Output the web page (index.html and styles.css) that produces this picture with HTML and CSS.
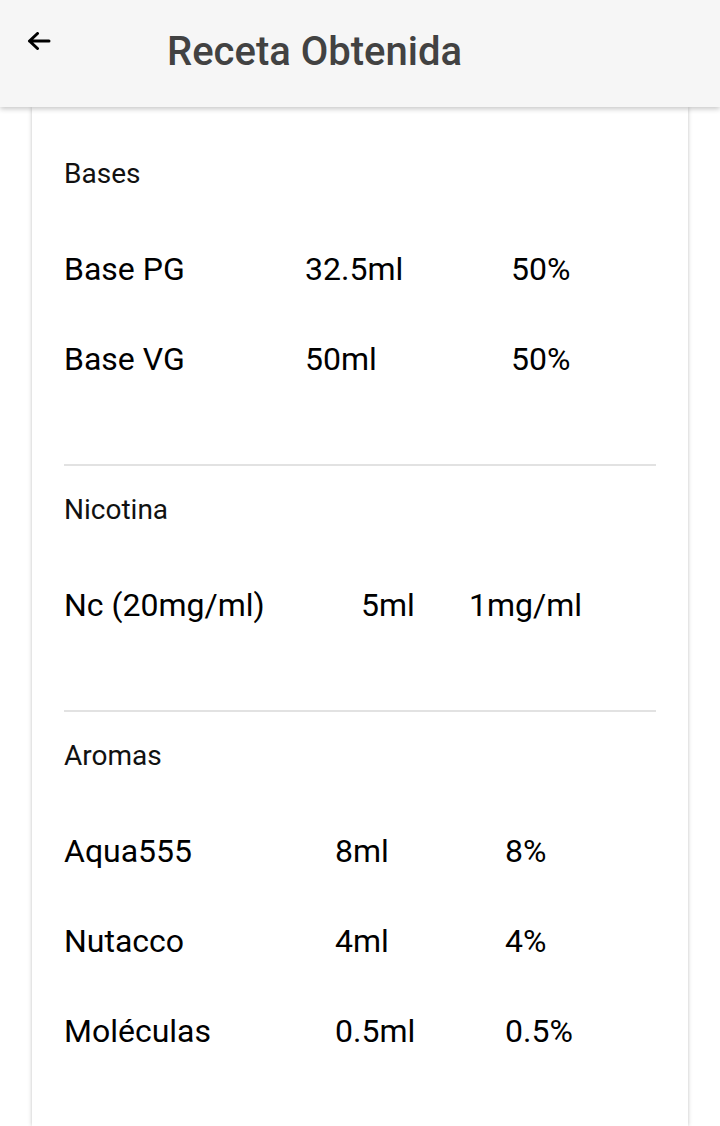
FILE: index.html
```html
<!DOCTYPE html>
<html lang="es">
<head>
<meta charset="utf-8">
<title>Receta Obtenida</title>
<link rel="stylesheet" href="styles.css">
</head>
<body>
<header class="appbar">
  <button class="back" aria-label="Atrás">
    <svg width="24" height="18" viewBox="0 0 24 18" aria-hidden="true">
      <path d="M10.5 1.5 L2.5 9 L10.5 16.5 M2.5 9 H22" fill="none" stroke="#000" stroke-width="3" stroke-linecap="round" stroke-linejoin="round"/>
    </svg>
  </button>
  <h1 class="title">Receta Obtenida</h1>
</header>
<main class="card">
  <section class="section bases">
    <h2 class="section-title">Bases</h2>
    <div class="rows">
      <div class="row"><span>Base PG</span><span>32.5ml</span><span>50%</span></div>
      <div class="row"><span>Base VG</span><span>50ml</span><span>50%</span></div>
    </div>
  </section>
  <section class="section nicotina">
    <h2 class="section-title">Nicotina</h2>
    <div class="rows">
      <div class="row"><span>Nc (20mg/ml)</span><span>5ml</span><span>1mg/ml</span></div>
    </div>
  </section>
  <section class="section aromas">
    <h2 class="section-title">Aromas</h2>
    <div class="rows">
      <div class="row"><span>Aqua555</span><span>8ml</span><span>8%</span></div>
      <div class="row"><span>Nutacco</span><span>4ml</span><span>4%</span></div>
      <div class="row"><span>Moléculas</span><span>0.5ml</span><span>0.5%</span></div>
    </div>
  </section>
</main>
</body>
</html>
```
FILE: styles.css
```css
* { box-sizing: border-box; }
html, body {
  margin: 0;
  padding: 0;
  background: #ffffff;
  font-family: Roboto, "Noto Sans", "Liberation Sans", sans-serif;
  color: #000;
  overflow: hidden;
}
.appbar {
  position: relative;
  z-index: 2;
  height: 107px;
  background: #f6f6f6;
  box-shadow: 0 2px 5px rgba(0, 0, 0, 0.22);
  display: flex;
  align-items: flex-start;
}
.back {
  border: 0;
  background: none;
  padding: 0;
  margin: 32px 0 0 27px;
  width: 24px;
  height: 18px;
  display: block;
}
.back svg { display: block; }
.title {
  margin: 0 0 0 116px;
  font-size: 40px;
  font-weight: 500;
  line-height: 104px;
  color: #424242;
}
.card {
  margin: 0 32px;
  padding: 47px 32px 0;
  background: #fff;
  box-shadow: 0 0 4px rgba(0, 0, 0, 0.25);
  min-height: calc(100vh - 107px);
}
.section {
  padding: 0 0 60px;
}
.section + .section {
  border-top: 2px solid #e2e2e2;
  padding-top: 24px;
}
.aromas {
  padding-bottom: 30px;
}
.section-title {
  margin: 0;
  font-size: 28px;
  font-weight: 400;
  line-height: 40px;
  color: #111;
}
.rows {
  margin-top: 30px;
}
.row {
  display: grid;
  height: 90px;
  line-height: 90px;
  font-size: 32px;
  color: #000;
  white-space: nowrap;
}
.bases .row { grid-template-columns: 241px 206px 1fr; }
.nicotina .row { grid-template-columns: 297px 108px 1fr; }
.aromas .row { grid-template-columns: 271px 170px 1fr; }
```
